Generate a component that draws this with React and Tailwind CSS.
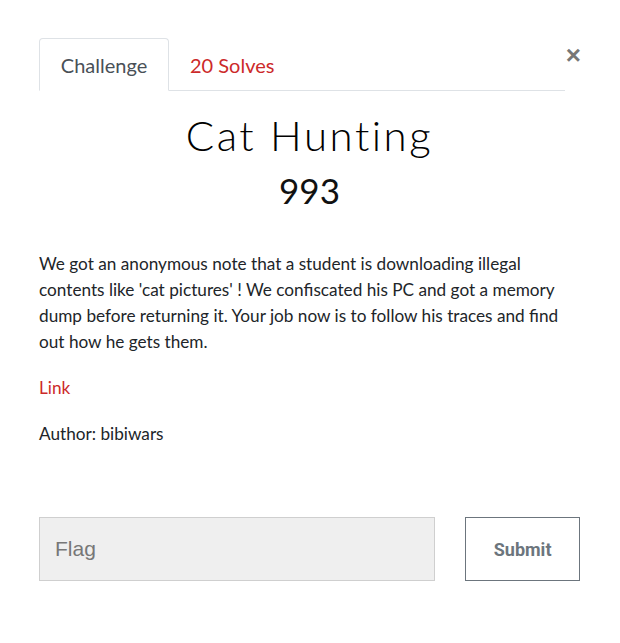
import React, { useState } from 'react';

const App = () => {
    const [flag, setFlag] = useState('');

    return (
        <div className="w-[620px] h-[643px] bg-white font-['Lato','Liberation_Sans',sans-serif] text-[#212529]">
            <div className="pl-[39px] pr-[40px] pt-[38px]">
                {/* Tabs + close */}
                <div className="flex items-start">
                    <div className="flex w-[526px] items-end border-b border-[#dee2e6]">
                        <div className="h-[53px] w-[130px] -mb-px pt-[1px] flex items-center justify-center rounded-t-[4px] border border-[#dee2e6] border-b-white bg-white text-[20px] text-[#495057]">
                            Challenge
                        </div>
                        <div className="h-[52px] pt-[1px] px-[21px] flex items-center text-[20px] text-[#cc2a2a]">
                            20 Solves
                        </div>
                    </div>
                    <button className="ml-auto mr-[-1px] mt-[4px] text-[#777] font-['Liberation_Sans',sans-serif] text-[26px] leading-none font-bold">
                        ×
                    </button>
                </div>

                {/* Title */}
                <div className="text-center">
                    <h1 className="mt-[19px] text-[42px] leading-[50px] font-light tracking-[2.5px] text-black">
                        Cat Hunting
                    </h1>
                    <div className="mt-[9px] text-[35px] leading-[42px] text-[#111]">993</div>
                </div>

                {/* Description */}
                <div className="mt-[40px] pr-[15px] text-[17.2px] leading-[26px]">
                    <p>
                        We got an anonymous note that a student is downloading illegal contents like 'cat pictures' ! We confiscated his PC and got a memory dump before returning it. Your job now is to follow his traces and find out how he gets them.
                    </p>
                    <p className="mt-[20px] text-[#cc2a2a]">Link</p>
                    <p className="mt-[20px]">Author: bibiwars</p>
                </div>

                {/* Flag form */}
                <div className="mt-[70px] flex items-center">
                    <input
                        value={flag}
                        onChange={(e) => setFlag(e.target.value)}
                        placeholder="Flag"
                        className="w-[397px] h-[64px] px-[15px] bg-[#efefef] border border-[#cfcfcf] text-[21px] font-['Liberation_Sans',sans-serif] text-[#333] placeholder:text-[#777] outline-none"
                    />
                    <button className="ml-[30px] w-[115px] h-[64px] border border-[#6c757d] bg-white text-[18px] font-bold text-[#6c757d] font-['Roboto',sans-serif]">
                        Submit
                    </button>
                </div>
            </div>
        </div>
    );
};

export default App;
